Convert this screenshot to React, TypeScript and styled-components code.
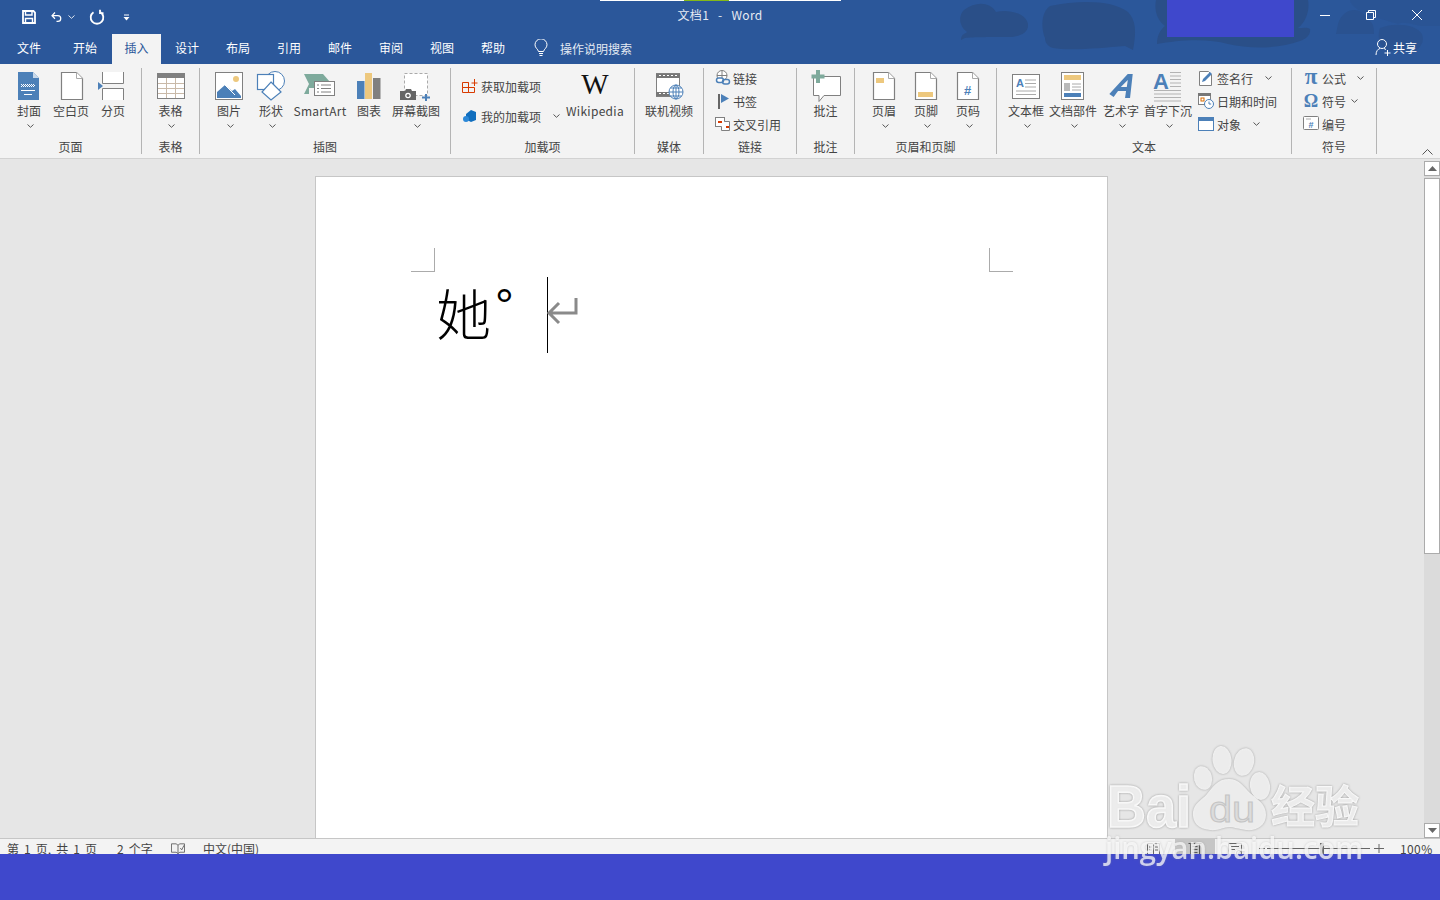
import React from "react";
import styled, { createGlobalStyle } from "styled-components";

const Global = createGlobalStyle`
  html, body { margin: 0; padding: 0; height: 100%; overflow: hidden; background: #e6e6e6; }
  #root { height: 100%; }
  * { box-sizing: border-box; }
`;

const FONT = `"Noto Sans CJK SC", "Noto Sans", "Liberation Sans", sans-serif`;
const BLUE = "#4c80b8";
const GREY = "#808080";
const AMBER = "#edc87e";

const App_ = styled.div`
  position: relative;
  width: 1440px;
  height: 900px;
  overflow: hidden;
  display: flex;
  flex-direction: column;
  font-family: ${FONT};
  font-size: 12px;
  color: #444;
`;
const Chrome = styled.div`
  position: relative;
  flex: none;
  background: #2b579a;
`;
const TitleBar = styled.header`
  position: relative;
  height: 34px;
  display: flex;
  align-items: center;
  color: #fff;
`;
const Blots = styled.svg`
  position: absolute;
  left: 940px;
  top: 0;
  pointer-events: none;
`;
const LoadStrip = styled.div`
  position: absolute;
  left: 600px;
  top: 0;
  width: 241px;
  height: 1px;
  background: linear-gradient(90deg, #fff 0 84px, #84b818 84px 129px, #fff 129px);
`;
const Mask = styled.div`
  position: absolute;
  left: 1167px;
  top: 0;
  width: 127px;
  height: 37px;
  background: #3f48cc;
  z-index: 3;
`;
const Qat = styled.div`
  position: relative;
  display: flex;
  align-items: center;
  padding: 0 0 0 21px;
  height: 32px;
  width: 420px;
  flex: none;
`;
const QatSlot = styled.span<{ $w: number }>`
  display: flex;
  align-items: center;
  width: ${(p) => p.$w}px;
`;
const QatChev = styled.span`
  display: flex;
  margin-left: 6px;
`;
const Title = styled.div`
  position: relative;
  width: 600px;
  flex: none;
  text-align: center;
  font-size: 12px;
  letter-spacing: 0.3px;
  line-height: 16px;
  color: #e6ebf3;
  white-space: pre;
  margin-top: -5px;
`;
const WinControls = styled.div`
  position: absolute;
  right: 0;
  top: 0;
  display: flex;
  z-index: 2;
`;
const WinBtn = styled.div`
  width: 46px;
  height: 30px;
  display: flex;
  align-items: center;
  justify-content: center;
`;
const TabBar = styled.nav`
  position: relative;
  height: 30px;
  display: flex;
  gap: 2px;
  padding-left: 4px;
  color: #fff;
`;
const Tab = styled.div<{ $active?: boolean; $w?: number; $after?: number }>`
  width: ${(p) => p.$w ?? 48}px;
  margin-right: ${(p) => p.$after ?? 1}px;
  flex: none;
  text-align: center;
  line-height: 28px;
  color: ${(p) => (p.$active ? "#2b579a" : "#fff")};
  background: ${(p) => (p.$active ? "#f3f3f3" : "transparent")};
`;
const Search = styled.div`
  display: flex;
  align-items: center;
  gap: 12px;
  margin-left: 14px;
  height: 28px;
  color: #e4eaf3;
`;
const Share = styled.div`
  position: absolute;
  right: 23px;
  top: 3px;
  display: flex;
  align-items: center;
  gap: 1px;
  height: 20px;
  color: #fff;
`;
const Ribbon = styled.section`
  position: relative;
  height: 95px;
  flex: none;
  background: #f3f3f3;
  border-bottom: 1px solid #d2d2d2;
  display: flex;
  padding-top: 4px;
`;
const Group = styled.div<{ $w: number }>`
  width: ${(p) => p.$w}px;
  height: 86px;
  flex: none;
  display: flex;
  flex-direction: column;
  border-right: 1px solid #b4b4b4;
`;
const GroupBody = styled.div<{ $pl?: number; $center?: boolean }>`
  height: 71px;
  flex: none;
  display: flex;
  padding-left: ${(p) => p.$pl ?? 0}px;
  justify-content: ${(p) => (p.$center ? "center" : "flex-start")};
`;
const GroupLabel = styled.div`
  text-align: center;
  line-height: 15px;
  height: 15px;
  color: #444;
`;
const LargeBtn = styled.div<{ $w: number }>`
  width: ${(p) => p.$w}px;
  flex: none;
  padding-top: 2px;
  display: flex;
  flex-direction: column;
  align-items: center;
`;
const LargeLabel = styled.div<{ $latin?: boolean }>`
  margin-top: 1px;
  line-height: 16px;
  white-space: nowrap;
  letter-spacing: ${(p) => (p.$latin ? "0.3px" : "0")};
`;
const ChevBox = styled.div`
  margin-top: 5px;
  margin-left: 2px;
  height: 4px;
  display: flex;
`;
const SmallCol = styled.div<{ $w?: number; $gap?: number; $top?: number; $left?: number }>`
  display: flex;
  flex-direction: column;
  width: ${(p) => (p.$w ? `${p.$w}px` : "auto")};
  gap: ${(p) => p.$gap ?? 3}px;
  margin-top: ${(p) => (p.$top ?? 0) - 1}px;
  margin-left: ${(p) => p.$left ?? 0}px;
  flex: none;
`;
const SmallRow = styled.div<{ $gap?: number }>`
  height: 20px;
  display: flex;
  align-items: center;
  gap: ${(p) => p.$gap ?? 2}px;
  white-space: nowrap;
`;
const RowChev = styled.span<{ $m: number }>`
  display: flex;
  margin-left: ${(p) => p.$m - 2}px;
`;
const Collapse = styled.svg`
  position: absolute;
  right: 7px;
  bottom: 3px;
`;
const Canvas = styled.main`
  flex: 1;
  min-height: 0;
  display: flex;
  background: #e6e6e6;
  overflow: hidden;
`;
const DocArea = styled.div`
  width: 1424px;
  flex: none;
  padding: 17px 0 0 315px;
`;
const Page = styled.article`
  width: 793px;
  height: 800px;
  background: #fff;
  border: 1px solid #c6c6c6;
  padding: 71px 94px 0 95px;
`;
const MarginRow = styled.div`
  display: flex;
  justify-content: space-between;
`;
const CropMark = styled.div<{ $side: "left" | "right" }>`
  width: 24px;
  height: 24px;
  border-bottom: 1px solid #ababab;
  ${(p) => (p.$side === "left" ? "border-right" : "border-left")}: 1px solid #ababab;
`;
const TextLine = styled.div`
  display: flex;
  align-items: flex-start;
  height: 76px;
  margin-top: 5px;
  padding-left: 25px;
  color: #000;
`;
const Glyph = styled.span`
  font-family: "Noto Sans CJK SC", sans-serif;
  font-size: 55px;
  font-weight: 300;
  line-height: 68px;
  width: 54px;
  flex: none;
`;
const Degree = styled.span`
  font-family: "Liberation Sans", sans-serif;
  font-size: 47px;
  line-height: 58px;
  width: 57px;
  flex: none;
  padding-left: 5px;
`;
const Caret = styled.span`
  width: 1px;
  height: 76px;
  background: #000;
  flex: none;
`;
const Pilcrow = styled.svg`
  margin-top: 20px;
  margin-left: -2px;
  flex: none;
`;
const Scrollbar = styled.aside`
  width: 16px;
  flex: none;
  margin-top: 2px;
  background: #dbdbdb;
  display: flex;
  flex-direction: column;
`;
const ScrollBtn = styled.div`
  height: 15px;
  flex: none;
  background: #fff;
  border: 1px solid #ababab;
  display: flex;
  align-items: center;
  justify-content: center;
`;
const Thumb = styled.div`
  height: 376px;
  flex: none;
  margin-top: 2px;
  background: #fff;
  border: 1px solid #ababab;
`;
const ScrollSpace = styled.div`
  flex: 1;
`;
const StatusBar = styled.footer`
  position: relative;
  height: 16px;
  flex: none;
  background: #f3f3f3;
  border-top: 1px solid #c6c6c6;
  overflow: hidden;
  display: flex;
  align-items: flex-start;
  color: #444;
`;
const StatusText = styled.span<{ $w: number; $ml?: number; $ls?: number }>`
  width: ${(p) => p.$w}px;
  margin-left: ${(p) => p.$ml ?? 0}px;
  flex: none;
  line-height: 20px;
  white-space: pre;
  word-spacing: 2.4px;
  letter-spacing: ${(p) => p.$ls ?? 0}px;
`;
const StatusIcon = styled.span<{ $w: number; $ml?: number; $active?: boolean; $start?: boolean }>`
  width: ${(p) => p.$w}px;
  height: 16px;
  margin-left: ${(p) => p.$ml ?? 0}px;
  flex: none;
  display: flex;
  justify-content: ${(p) => (p.$start ? "flex-start" : "center")};
  padding-top: 3px;
  background: ${(p) => (p.$active ? "#c6c6c6" : "transparent")};
`;
const BottomMask = styled.div`
  height: 46px;
  flex: none;
  background: #3f48cc;
`;
const Watermark = styled.svg`
  position: absolute;
  left: 1100px;
  top: 740px;
  pointer-events: none;
  z-index: 5;
`;

const Chev = ({ c = "#555" }: { c?: string }) => (
  <svg width="7" height="4" viewBox="0 0 7 4"><path d="M.5.5 3.5 3.300 6.500.5" fill="none" stroke={c} /></svg>
);

const I32 = ({ children }: { children: React.ReactNode }) => (
  <svg width="32" height="32" viewBox="0 0 32 32" style={{ flex: "none", overflow: "visible" }}>{children}</svg>
);
const I16 = ({ children }: { children: React.ReactNode }) => (
  <svg width="16" height="16" viewBox="0 0 16 16" style={{ flex: "none", overflow: "visible" }}>{children}</svg>
);
const Doc = ({ x = 5 }: { x?: number }) => (
  <g>
    <path d={`M${x + .5} 2.500h15l6 6v21h-21z`} fill="#fff" stroke={GREY} strokeWidth="1.200" />
    <path d={`M${x + 15.5} 2.500v6h6`} fill="#fff" stroke="#aaa" />
  </g>
);

const Icons = {
  cover: <I32><path d="M5 2h15l6 6v22H5z" fill={BLUE} /><path d="M20 2l6 6h-6z" fill="#c9d9ea" /><path d="M8 14.500h14M8 16.500h14" stroke="#fff" strokeDasharray="1 1" /><path d="M8 15.500h14" stroke="#fff" strokeDasharray="1 1" strokeDashoffset="1" /><path d="M8 20.500h14M11 24.500h8" stroke="#fff" /></I32>,
  blank: <I32><Doc x={6} /></I32>,
  pagebreak: <I32><path d="M5.500 2v11.500h21V2M5.500 30V18.500h21V30" fill="#fff" stroke={GREY} /><path d="M1 12l5 4-5 4z" fill={BLUE} /></I32>,
  table: <I32><rect x="2.500" y="3.500" width="27" height="25" fill="#fff" stroke={GREY} /><rect x="2" y="3" width="28" height="5" fill={GREY} /><path d="M3 13.500h26M3 18.500h26M3 23.500h26M11.500 8v20M20.500 8v20" stroke="#c9b9a8" /></I32>,
  picture: <I32><rect x="2.500" y="2.500" width="27" height="27" fill="#fff" stroke={GREY} /><circle cx="23" cy="9" r="3" fill={AMBER} /><path d="M4 28v-6l8-7 7 6 3-2 6 7v2z" fill={BLUE} /><path d="M12 15l10 10" stroke="#fff" /></I32>,
  shapes: <I32><circle cx="20" cy="11" r="9.500" fill="#fff" stroke={BLUE} /><rect x="2.500" y="4.500" width="16" height="15" fill="#fff" stroke={BLUE} strokeWidth="1.200" /><path d="M16 12l10 10-10 8-9-8z" fill="#fff" stroke={BLUE} strokeWidth="1.200" /></I32>,
  smartart: <I32><path d="M0 4h19l7 8H14v6H5v6H0l5-10z" fill="#7eaa9c" /><rect x="10.500" y="11.500" width="20" height="14" fill="#fff" stroke={GREY} /><path d="M13 15h2M17 15h10M13 18.500h2M17 18.500h10M13 22h2M17 22h10" stroke={GREY} /></I32>,
  chart: <I32><rect x="4" y="11" width="7.500" height="18" fill={BLUE} /><rect x="12" y="3" width="7" height="26" fill={AMBER} /><rect x="20" y="8" width="7.500" height="21" fill={GREY} /></I32>,
  shot: <I32><rect x="4.500" y="3.500" width="23" height="22" fill="#fff" stroke="#aaa" strokeDasharray="3 2" /><path d="M0 21h5l1-2h5l1 2h4v9H0z" fill="#666" /><circle cx="8" cy="25.500" r="2.800" fill="#fff" /><circle cx="8" cy="25.500" r="1.500" fill="#666" /><path d="M26 24v7M22 27.500h8" stroke={BLUE} strokeWidth="2" /></I32>,
  wiki: <I32><text x="16" y="24" textAnchor="middle" fontFamily="Liberation Serif, serif" fontSize="29" fill="#111">W</text></I32>,
  video: <I32><rect x="3.500" y="3.500" width="23" height="23" fill="#fff" stroke={GREY} /><path d="M3 4h24v4H3zM3 22h24v4H3z" fill="#777" /><path d="M6 5.500h20M6 23.500h20" stroke="#fff" strokeDasharray="2 2" /><circle cx="23" cy="22" r="7" fill="#fff" stroke={BLUE} /><path d="M16 22h14M23 15v14M17.500 18h11M17.500 26h11" stroke={BLUE} /><ellipse cx="23" cy="22" rx="3" ry="7" fill="none" stroke={BLUE} /></I32>,
  comment: <I32><path d="M3.500 6.500h27v19H14l-5 6v-6H3.500z" fill="#fff" stroke={GREY} /><path d="M8 0v13M1.500 6.500h13" stroke="#7eaa9c" strokeWidth="4" /></I32>,
  header: <I32><Doc /><rect x="8" y="8" width="8" height="5" fill={AMBER} /></I32>,
  footer: <I32><Doc /><rect x="8" y="22" width="15" height="5" fill={AMBER} /></I32>,
  pagenum: <I32><Doc /><text x="15.500" y="25" textAnchor="middle" fontFamily="Liberation Sans, sans-serif" fontWeight="700" fontSize="13" fill={BLUE}>#</text></I32>,
  textbox: <I32><rect x="2.500" y="4.500" width="27" height="24" fill="#fff" stroke={GREY} /><text x="6" y="17" fontFamily="Liberation Sans, sans-serif" fontWeight="700" fontSize="11" fill={BLUE}>A</text><path d="M15 10h11M15 13.500h11M15 17h11M6 21h20M6 24.500h20" stroke="#aaa" /></I32>,
  parts: <I32><rect x="4.500" y="2.500" width="22" height="27" fill="#fff" stroke={GREY} /><rect x="7" y="5" width="17" height="5" fill={AMBER} /><rect x="7" y="13" width="6" height="8" fill="#b9b9b9" /><path d="M15 14h9M15 17h9M15 20h9" stroke="#aaa" /><rect x="7" y="23" width="17" height="4" fill={BLUE} /></I32>,
  wordart: <I32><path d="M3 23 20 3h5l-1 24h-5l.500-7h-8l-4 6zM14 16h6l.500-7z" fill={BLUE} fillRule="evenodd" transform="skewX(-4) translate(3 1)" /></I32>,
  dropcap: <I32><text x="1" y="19" fontFamily="Liberation Sans, sans-serif" fontWeight="700" fontSize="22" fill={BLUE}>A</text><path d="M18 2.500h11M18 6h11M18 9.500h11M18 13h11M18 16.500h11M2 20.500h27M2 24h27M2 27.500h27M2 31h27" stroke="#b3b3b3" /></I32>,
  getAddin: <I16><path d="M.5 4.500h6v5h-6zM.5 9.500h6v5h-6zM6.500 9.500h6v5h-6zM6.500 4.500v5" fill="none" stroke="#d83b01" /><path d="M9.500 5h6M12.500 1v7" stroke="#d83b01" /></I16>,
  myAddin: <I16><path d="M9 2l5 2v8l-5 2-4-2V9h-1V6z" fill="#106ebe" /><circle cx="4" cy="11" r="3" fill="#2b88d8" /></I16>,
  link: <I16><circle cx="7" cy="5.500" r="5" fill="#fff" stroke={GREY} /><path d="M2 5.500h10M7 .5v10" stroke={GREY} /><rect x="1.500" y="8" width="7" height="4.500" rx="2.200" fill="#fff" stroke={BLUE} strokeWidth="1.500" /><rect x="7.500" y="9.500" width="7" height="4.500" rx="2.200" fill="none" stroke={BLUE} strokeWidth="1.500" /></I16>,
  bookmark: <I16><path d="M4 1v15" stroke="#666" strokeWidth="2" /><path d="M6 1l8 4.500L6 10z" fill={BLUE} /></I16>,
  crossref: <I16><rect x=".5" y="1.500" width="9" height="9" fill="#fff" stroke={GREY} /><path d="M9.500 5.500h5v9h-8v-4" fill="#fff" stroke={GREY} /><rect x="3" y="5" width="4" height="2" fill="#d83b01" /><rect x="11" y="10" width="3" height="2" fill="#d83b01" /></I16>,
  sign: <I16><path d="M1.500 1.500h9l3 3v11h-12z" fill="#fff" stroke={GREY} /><path d="M4 12l1-3 7-7 2 2-7 7z" fill={BLUE} /></I16>,
  date: <I16><rect x=".5" y=".5" width="12" height="11" fill="#fff" stroke={GREY} /><rect x="0" y="0" width="13" height="3" fill="#777" /><rect x="3" y="5" width="3" height="3" fill="#fff" stroke="#d86a00" /><circle cx="11" cy="11" r="4.500" fill="#fff" stroke={BLUE} /><path d="M11 8.500V11h2.200" fill="none" stroke={BLUE} /></I16>,
  object: <I16><rect x=".5" y="1.500" width="15" height="13" fill="#fff" stroke={BLUE} /><rect x="0" y="1" width="16" height="4" fill={BLUE} /></I16>,
  pi: <I16><text x="7" y="14" textAnchor="middle" fontFamily="Liberation Serif, serif" fontWeight="700" fontSize="23" fill={BLUE}>π</text></I16>,
  omega: <I16><text x="7" y="13.500" textAnchor="middle" fontFamily="Liberation Serif, serif" fontWeight="700" fontSize="18" fill={BLUE}>Ω</text></I16>,
  number: <I16><rect x="-.5" y=".5" width="15" height="13" rx="1" fill="#fff" stroke={GREY} /><path d="M2 3h5" stroke="#aaa" /><text x="7" y="11.500" textAnchor="middle" fontFamily="Liberation Sans, sans-serif" fontWeight="700" fontSize="9" fill={BLUE}>#</text></I16>,
};

const Large = ({ w = 42, icon, label, chev = true, latin }: { w?: number; icon: React.ReactNode; label: string; chev?: boolean; latin?: boolean }) => (
  <LargeBtn $w={w}>
    {icon}
    <LargeLabel $latin={latin}>{label}</LargeLabel>
    {chev && <ChevBox><Chev /></ChevBox>}
  </LargeBtn>
);
const Small = ({ icon, label, chev, gap }: { icon: React.ReactNode; label: string; chev?: number; gap?: number }) => (
  <SmallRow $gap={gap}>
    {icon}
    <span>{label}</span>
    {chev !== undefined && <RowChev $m={chev}><Chev /></RowChev>}
  </SmallRow>
);

export default function App() {
  return (
    <App_>
      <Global />
      <Chrome>
        <Blots width="500" height="64" viewBox="0 0 500 64">
          <g fill="#2a4f88">
            <path d="M24 10c12-9 26-8 32 2 12-3 30 1 32 12 1 9-8 12-16 13-20 0-40 0-47 1l-4 2c0-6 4-6 6-8-8-6-9-16-3-22z" />
            <path d="M110 6c30-6 62-6 78 6 8 8 8 20 6 32l-1 6-8-4c-24 2-56 5-72 2-6-2-8-6-8-10-4-10-4-26 5-32z" />
            <path d="M216 0h152c2 10-2 22-10 28 4 0 10-1 12 1 1 6-4 10-10 12-22 8-50 8-72 3-20-6-50-4-71 0 0-8 3-14 8-18-8-6-11-16-9-26z" />
          </g>
          <g fill="#2a5290">
            <path d="M398 24c3-10 10-14 16-14 8 0 12 6 14 10 6 2 6 10 6 14h-38z" />
            <path d="M410 0h90v26l-16 0c-8 0-20-6-26-2-10-4-46-10-48-24z" opacity=".55" />
            <path d="M440 28c14-6 36-4 42 6 3 8-2 14-8 18-12 0-28 0-32-6-4-6-4-12-2-18z" />
          </g>
        </Blots>
        <TitleBar>
          <LoadStrip />
          <Qat>
            <QatSlot $w={30}>
              <svg width="16" height="16" viewBox="0 0 16 16"><path d="M2 2h10.500L14 3.500V14H2z" fill="none" stroke="#fff" strokeWidth="1.800" /><path d="M4.500 2v4h6.500V2M4.500 14V9.500h7V14" fill="none" stroke="#fff" strokeWidth="1.400" /></svg>
            </QatSlot>
            <QatSlot $w={24}>
              <svg width="16" height="16" viewBox="0 0 16 16"><path d="M2 6h8a4.200 4.200 0 0 1 0 8.400H8M5.800 1.500 1.500 6l4.300 4.500" fill="none" stroke="#fff" strokeWidth="1.800" /></svg>
              <QatChev><Chev c="#dfe6f0" /></QatChev>
            </QatSlot>
            <QatSlot $w={14} />
            <QatSlot $w={34}>
              <svg width="16" height="16" viewBox="0 0 16 16"><path d="M4.500 3.200a6.300 6.300 0 1 0 7 0M11 .8v3.400h3.500" fill="none" stroke="#fff" strokeWidth="1.800" /></svg>
            </QatSlot>
            <QatSlot $w={10}>
              <svg width="7" height="7" viewBox="0 0 7 7"><path d="M1 1h5" stroke="#fff" /><path d="M.5 3h6L3.500 6.500z" fill="#fff" /></svg>
            </QatSlot>
          </Qat>
          <Title>{"文档1   -   Word"}</Title>
          <Mask />
          <WinControls>
            <WinBtn><svg width="12" height="12" viewBox="0 0 12 12"><path d="M1 6.500h10" stroke="#fff" /></svg></WinBtn>
            <WinBtn><svg width="12" height="12" viewBox="0 0 12 12"><path d="M1.500 3.500h7v7h-7zM3.500 3.500v-2h7v7h-2" fill="none" stroke="#fff" /></svg></WinBtn>
            <WinBtn><svg width="12" height="12" viewBox="0 0 12 12"><path d="M1 1l10 10M11 1 1 11" stroke="#fff" /></svg></WinBtn>
          </WinControls>
        </TitleBar>
        <TabBar>
          <Tab $w={50} $after={4}>文件</Tab>
          <Tab $w={50} $after={0}>开始</Tab>
          <Tab $active $w={49} $after={0}>插入</Tab>
          <Tab>设计</Tab>
          <Tab>布局</Tab>
          <Tab>引用</Tab>
          <Tab>邮件</Tab>
          <Tab>审阅</Tab>
          <Tab>视图</Tab>
          <Tab>帮助</Tab>
          <Search>
            <svg width="14" height="18" viewBox="0 0 14 18"><path d="M4.500 12.500C4 10 1 9 1 5.800a6 6 0 0 1 12 0C13 9 10 10 9.500 12.500zM5 14.500h4M5.500 16.500h3" fill="none" stroke="#fff" /></svg>
            <span>操作说明搜索</span>
          </Search>
          <Share>
            <svg width="17" height="18" viewBox="0 0 17 18"><circle cx="7" cy="6" r="4.500" fill="none" stroke="#fff" /><path d="M1 17c0-4 2-6 4-6.500M9 10.500l2 1M9.500 15h6M12.500 12v6" fill="none" stroke="#fff" /></svg>
            <span>共享</span>
          </Share>
        </TabBar>
      </Chrome>
      <Ribbon>
        <Group $w={142}>
          <GroupBody $pl={8}>
            <Large icon={Icons.cover} label="封面" />
            <Large icon={Icons.blank} label="空白页" chev={false} />
            <Large icon={Icons.pagebreak} label="分页" chev={false} />
          </GroupBody>
          <GroupLabel>页面</GroupLabel>
        </Group>
        <Group $w={58}>
          <GroupBody $center><Large icon={Icons.table} label="表格" /></GroupBody>
          <GroupLabel>表格</GroupLabel>
        </Group>
        <Group $w={251}>
          <GroupBody $pl={8}>
            <Large icon={Icons.picture} label="图片" />
            <Large icon={Icons.shapes} label="形状" />
            <Large w={56} icon={Icons.smartart} label="SmartArt" chev={false} latin />
            <Large icon={Icons.chart} label="图表" chev={false} />
            <Large w={52} icon={Icons.shot} label="屏幕截图" />
          </GroupBody>
          <GroupLabel>插图</GroupLabel>
        </Group>
        <Group $w={184}>
          <GroupBody $pl={11}>
            <SmallCol $w={102} $gap={10} $top={9}>
              <Small icon={Icons.getAddin} label="获取加载项" gap={3} />
              <Small icon={Icons.myAddin} label="我的加载项" gap={3} chev={11} />
            </SmallCol>
            <Large w={62} icon={Icons.wiki} label="Wikipedia" chev={false} latin />
          </GroupBody>
          <GroupLabel>加载项</GroupLabel>
        </Group>
        <Group $w={69}>
          <GroupBody $center><Large w={52} icon={Icons.video} label="联机视频" chev={false} /></GroupBody>
          <GroupLabel>媒体</GroupLabel>
        </Group>
        <Group $w={93}>
          <GroupBody $pl={11}>
            <SmallCol $top={1}>
              <Small icon={Icons.link} label="链接" />
              <Small icon={Icons.bookmark} label="书签" />
              <Small icon={Icons.crossref} label="交叉引用" />
            </SmallCol>
          </GroupBody>
          <GroupLabel>链接</GroupLabel>
        </Group>
        <Group $w={58}>
          <GroupBody $center><Large icon={Icons.comment} label="批注" chev={false} /></GroupBody>
          <GroupLabel>批注</GroupLabel>
        </Group>
        <Group $w={142}>
          <GroupBody $pl={8}>
            <Large icon={Icons.header} label="页眉" />
            <Large icon={Icons.footer} label="页脚" />
            <Large icon={Icons.pagenum} label="页码" />
          </GroupBody>
          <GroupLabel>页眉和页脚</GroupLabel>
        </Group>
        <Group $w={295}>
          <GroupBody $pl={8}>
            <Large icon={Icons.textbox} label="文本框" />
            <Large w={52} icon={Icons.parts} label="文档部件" />
            <Large w={44} icon={Icons.wordart} label="艺术字" />
            <Large w={50} icon={Icons.dropcap} label="首字下沉" />
            <SmallCol $left={5} $top={1}>
              <Small icon={Icons.sign} label="签名行" gap={3} chev={11} />
              <Small icon={Icons.date} label="日期和时间" gap={3} />
              <Small icon={Icons.object} label="对象" gap={3} chev={11} />
            </SmallCol>
          </GroupBody>
          <GroupLabel>文本</GroupLabel>
        </Group>
        <Group $w={85}>
          <GroupBody $pl={12}>
            <SmallCol $top={1}>
              <Small icon={Icons.pi} label="公式" chev={11} />
              <Small icon={Icons.omega} label="符号" chev={5} />
              <Small icon={Icons.number} label="编号" />
            </SmallCol>
          </GroupBody>
          <GroupLabel>符号</GroupLabel>
        </Group>
        <Collapse width="11" height="6" viewBox="0 0 11 6"><path d="M.5 5.500l5-5 5 5" fill="none" stroke="#555" /></Collapse>
      </Ribbon>
      <Canvas>
        <DocArea>
          <Page>
            <MarginRow>
              <CropMark $side="left" />
              <CropMark $side="right" />
            </MarginRow>
            <TextLine>
              <Glyph>她</Glyph>
              <Degree>°</Degree>
              <Caret />
              <Pilcrow width="32" height="30" viewBox="0 0 32 30">
                <path d="M30 1v15H3M13 6 3 16l10 10" fill="none" stroke="#8a8a8a" strokeWidth="3" />
              </Pilcrow>
            </TextLine>
          </Page>
        </DocArea>
        <Scrollbar>
          <ScrollBtn><svg width="9" height="5" viewBox="0 0 9 5"><path d="M4.500 0 9 5H0z" fill="#666" /></svg></ScrollBtn>
          <Thumb />
          <ScrollSpace />
          <ScrollBtn><svg width="9" height="5" viewBox="0 0 9 5"><path d="M4.500 5 9 0H0z" fill="#666" /></svg></ScrollBtn>
        </Scrollbar>
      </Canvas>
      <StatusBar>
        <StatusText $w={110} $ml={7}>第 1 页, 共 1 页</StatusText>
        <StatusText $w={54}>2 个字</StatusText>
        <StatusIcon $w={14} $start>
          <svg width="15" height="13" viewBox="0 0 15 13"><path d="M.5 1.500h5l2 1.500v9l-2-1.500h-5zM7.500 3l2-1.500h5v9h-5l-2 1.500M10 6l1.500 2L14 3" fill="none" stroke="#666" /></svg>
        </StatusIcon>
        <StatusText $w={90} $ml={18}>中文(中国)</StatusText>
        <StatusIcon $w={14} $ml={853}>
          <svg width="13" height="14" viewBox="0 0 13 14"><path d="M.5 1.500h5l1 1 1-1h5v12h-12zM6.500 2.500v11M2 5h3M2 8h3M8 5h3M8 8h3" fill="none" stroke="#666" /></svg>
        </StatusIcon>
        <StatusIcon $w={40} $active $ml={15}>
          <svg width="14" height="14" viewBox="0 0 14 14"><path d="M.5 1.500h13M2.500 1.500v12h9v-12M4.500 4.500h5M4.500 7.500h5M4.500 10.500h5" fill="none" stroke="#555" /></svg>
        </StatusIcon>
        <StatusIcon $w={14} $ml={13}>
          <svg width="14" height="14" viewBox="0 0 14 14"><path d="M.5 1.500h13v8M.5 1.500v12h7M3 4.500h8M3 7.500h4" fill="none" stroke="#666" /><circle cx="11" cy="11" r="2.500" fill="none" stroke="#666" /></svg>
        </StatusIcon>
        <StatusIcon $w={128} $ml={17}>
          <svg width="128" height="13" viewBox="0 0 128 13"><path d="M0 6.500h6M8 6.500h103M115 6.500h10M120 2v9" fill="none" stroke="#666" /><rect x="61" y="1" width="4" height="11" fill="#666" /></svg>
        </StatusIcon>
        <StatusText $w={40} $ml={13} $ls={0.4}>100%</StatusText>
      </StatusBar>
      <BottomMask />
      <Watermark width="270" height="135" viewBox="1100 740 270 135">
        <g fill="rgb(248,248,248)" fillOpacity=".85" style={{ filter: "drop-shadow(0 0 1px rgba(130,130,130,.75))" }}>
          <ellipse cx="1222" cy="760" rx="9.500" ry="14" transform="rotate(-6 1222 760)" />
          <ellipse cx="1244" cy="762" rx="10" ry="14" transform="rotate(12 1244 762)" />
          <ellipse cx="1203" cy="778" rx="9" ry="12" transform="rotate(-14 1203 778)" />
          <ellipse cx="1260" cy="786" rx="10" ry="14" transform="rotate(-8 1260 786)" />
          <path d="M1229 779c10 0 15 8 21 14 8 7 16 11 16 22 0 11-10 16-20 15-8-1-12-3-17-3s-11 4-19 3c-12-1-18-8-17-18 1-9 9-12 14-18 6-7 10-15 22-15z" />
          <text x="1107" y="827" fontFamily="Liberation Sans, sans-serif" fontWeight="700" fontSize="60" textLength="84" lengthAdjust="spacingAndGlyphs" stroke="rgb(248,248,248)" strokeWidth="1.500">Bai</text>
          <text x="1271" y="823" fontFamily="Noto Sans CJK SC, sans-serif" fontWeight="700" fontSize="44" textLength="88" lengthAdjust="spacingAndGlyphs" stroke="rgb(248,248,248)" strokeWidth="1">经验</text>
        </g>
        <text x="1209" y="822" fontFamily="Liberation Sans, sans-serif" fontWeight="400" fontSize="36" textLength="46" lengthAdjust="spacingAndGlyphs" fill="#dcdcdc" stroke="#c4c4c4" strokeWidth="1">du</text>
        <text x="1105" y="859" fontFamily="Open Sans, Noto Sans, sans-serif" fontWeight="600" fontSize="30" textLength="258" lengthAdjust="spacingAndGlyphs" fill="#fff" fillOpacity=".72" style={{ filter: "drop-shadow(0 0 1px rgba(140,140,140,.5))" }}>jingyan.baidu.com</text>
      </Watermark>
    </App_>
  );
}
